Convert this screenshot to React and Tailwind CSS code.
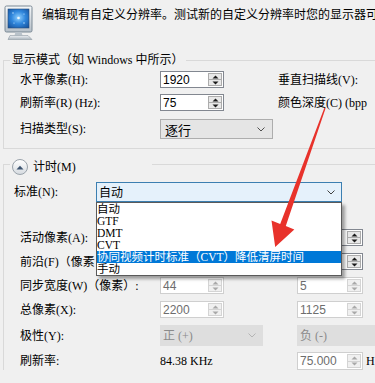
import React from "react";

const SERIF = "font-['Liberation_Serif','Noto_Sans_CJK_SC',serif]";
const SANS = "font-['Liberation_Sans','Noto_Sans_CJK_SC',sans-serif]";

function Tri({ up, color }) {
  return (
    <svg width="7" height="4" viewBox="0 0 7 4">
      {up ? <path d="M0.5 3.5 L3.5 0.5 L6.5 3.5 Z" fill={color} /> : <path d="M0.5 0.5 L6.5 0.5 L3.5 3.5 Z" fill={color} />}
    </svg>
  );
}

function Spin({ value, disabled, wide }) {
  return (
    <div
      className={
        (wide ? "w-[66px] " : "w-[64px] ") +
        (disabled ? "border-[#cfcfcf] text-[#6d6d6d] " : "border-[#828790] text-black ") +
        "flex h-full shrink-0 items-stretch border bg-white"
      }
    >
      <span className={SANS + " flex flex-1 items-center pl-[2px] text-[12px] leading-none"}>{value}</span>
      <div
        className={
          (disabled ? "border-[#d4d4d4] bg-[#f0f0f0] " : "border-[#acacac] bg-[#e8e8e8] ") +
          "m-[1px] flex w-[14px] flex-col border"
        }
      >
        <div className={(disabled ? "border-[#d4d4d4] " : "border-[#acacac] ") + "flex flex-1 items-center justify-center border-b"}>
          <Tri up color={disabled ? "#a8a8a8" : "#1a1a1a"} />
        </div>
        <div className="flex flex-1 items-center justify-center">
          <Tri color={disabled ? "#a8a8a8" : "#1a1a1a"} />
        </div>
      </div>
    </div>
  );
}

function Chevron({ color }) {
  return (
    <svg width="8" height="5" viewBox="0 0 8 5">
      <path d="M0.5 0.5 L4 4 L7.5 0.5" fill="none" stroke={color} strokeWidth="1" />
    </svg>
  );
}

function Label({ children, w = "w-[140px]" }) {
  return <span className={w + " " + SERIF + " shrink-0 whitespace-nowrap text-[12px] leading-none text-black"}>{children}</span>;
}

function MonitorIcon() {
  return (
    <svg width="30" height="36" viewBox="0 0 30 36">
      <defs>
        <linearGradient id="frm" x1="0" y1="0" x2="0" y2="1">
          <stop offset="0" stopColor="#f6f8fa" />
          <stop offset="1" stopColor="#b5bec7" />
        </linearGradient>
        <radialGradient id="scr" cx="0.5" cy="0.45" r="0.75">
          <stop offset="0" stopColor="#8fd0ff" />
          <stop offset="0.45" stopColor="#2f86dc" />
          <stop offset="1" stopColor="#134a92" />
        </radialGradient>
        <linearGradient id="bse" x1="0" y1="0" x2="0" y2="1">
          <stop offset="0" stopColor="#eef1f4" />
          <stop offset="1" stopColor="#aab4bd" />
        </linearGradient>
      </defs>
      <rect x="1" y="1" width="27" height="26" rx="1.5" fill="url(#frm)" stroke="#7b8995" />
      <rect x="4" y="4" width="21" height="19" fill="url(#scr)" stroke="#2b4f7c" strokeWidth="0.6" />
      <circle cx="14.5" cy="13" r="1.3" fill="#e8f6ff" />
      <circle cx="9" cy="8" r="0.7" fill="#cfeaff" />
      <circle cx="20" cy="9" r="0.6" fill="#cfeaff" />
      <circle cx="10" cy="18" r="0.6" fill="#cfeaff" />
      <circle cx="20" cy="18" r="0.7" fill="#cfeaff" />
      <path d="M11.5 27 H17.5 L18.5 30.5 H10.5 Z" fill="#b9c2ca" />
      <path d="M6 30.5 H24 L28 34.5 H4 Z" fill="url(#bse)" stroke="#8d98a2" strokeWidth="0.6" />
    </svg>
  );
}

export default function App() {
  const items = ["自动", "GTF", "DMT", "CVT", "协同视频计时标准（CVT）降低清屏时间", "手动"];
  return (
    <div className="relative h-[383px] w-[375px] overflow-hidden bg-[#f0f0f0]">
      {/* header */}
      <div className="flex h-[54px] items-start">
        <div className="ml-[4px] mt-[5px] shrink-0">
          <MonitorIcon />
        </div>
        <span className="ml-[8px] mt-[6px] whitespace-nowrap font-['Noto_Sans_CJK_SC',sans-serif] text-[12px] leading-[16px] text-black">
          编辑现有自定义分辨率。测试新的自定义分辨率时您的显示器可
        </span>
      </div>

      {/* group 1 */}
      <fieldset className="ml-[3px] w-[400px] border-b border-l border-t border-[#d9d9d9]">
        <legend className={SERIF + " ml-[6px] h-[12px] px-[2px] text-[12px] leading-[12px] text-black"}>
          显示模式（如 Windows 中所示）
        </legend>
        <div className="flex flex-col pb-[9px] pl-[16px] pt-[5px]">
          <div className="flex h-[17px] items-center">
            <Label>水平像素(H):</Label>
            <Spin value="1920" />
            <span className={SERIF + " ml-[54px] whitespace-nowrap text-[12px] leading-none"}>垂直扫描线(V):</span>
          </div>
          <div className="mt-[6px] flex h-[17px] items-center">
            <Label>刷新率(R) (Hz):</Label>
            <Spin value="75" />
            <span className={SERIF + " ml-[54px] whitespace-nowrap text-[12px] leading-none"}>颜色深度(C) (bpp</span>
          </div>
          <div className="mt-[8px] flex h-[20px] items-center">
            <Label>扫描类型(S):</Label>
            <div className="flex h-full w-[113px] items-center justify-between border border-[#adadad] bg-[#e5e5e5] pl-[4px] pr-[7px]">
              <span className="font-['Noto_Sans_CJK_SC',sans-serif] text-[13px] leading-none text-black">逐行</span>
              <Chevron color="#505050" />
            </div>
          </div>
        </div>
      </fieldset>

      {/* group 2 */}
      <fieldset className="ml-[3px] mt-[10px] w-[400px] border-l border-t border-[#d9d9d9]">
        <legend className="ml-[6px] h-[10px] w-[142px] pl-[2px]">
          <div className="flex items-start">
            <div className="flex h-[16px] w-[16px] items-center justify-center rounded-full border border-[#9aa3ab] bg-gradient-to-b from-[#ffffff] to-[#d6dbe0]">
              <svg width="8" height="5" viewBox="0 0 8 5">
                <path d="M0.5 4.5 L4 0.8 L7.5 4.5 Z" fill="#3d5470" />
              </svg>
            </div>
            <span className={SERIF + " ml-[5px] text-[12px] leading-[16px] text-black"}>计时(M)</span>
          </div>
        </legend>

        <div className="flex flex-col pt-[13px]">
          <div className="flex h-[20px] items-center pl-[10px]">
            <Label w="w-[82px]">标准(N):</Label>
            <div className="relative h-full w-[246px]">
              <div className="flex h-full w-full items-center justify-between border border-[#3c7fb1] bg-[#e5f1fb] pl-[2px] pr-[6px]">
                <span className="font-['Noto_Sans_CJK_SC',sans-serif] text-[12px] leading-none text-black">自动</span>
                <Chevron color="#404040" />
              </div>
              <div className="absolute left-0 top-full z-10 flex w-full flex-col border border-[#5a5a5a] bg-white shadow-[3px_3px_3px_rgba(0,0,0,0.35)]">
                {items.map((t, i) => (
                  <div
                    key={t}
                    className={
                      (i === 4 ? "bg-[#0078d7] text-white " : "text-black ") +
                      SERIF +
                      " flex h-[12px] items-center overflow-hidden whitespace-nowrap text-[11.5px] leading-[11px]"
                    }
                  >
                    {t}
                  </div>
                ))}
              </div>
            </div>
          </div>

          <div className="mt-[27px] flex h-[17px] items-center pl-[16px]">
            <Label w="w-[76px]">活动像素(A):</Label>
            <div className="ml-[64px] h-full">
              <Spin value="" />
            </div>
            <div className="ml-[73px] h-full">
              <Spin value="" wide />
            </div>
          </div>
          <div className="mt-[7px] flex h-[17px] items-center pl-[16px]">
            <span className={SERIF + " w-[76px] shrink-0 overflow-hidden whitespace-nowrap text-[12px] leading-none text-black"}>前沿(F)（像素</span>
            <div className="ml-[64px] h-full">
              <Spin value="" />
            </div>
            <div className="ml-[73px] h-full">
              <Spin value="" wide />
            </div>
          </div>
          <div className="mt-[7px] flex h-[17px] items-center pl-[16px]">
            <Label>同步宽度(W)（像素）:</Label>
            <Spin value="44" disabled />
            <div className="ml-[73px] h-full">
              <Spin value="5" wide disabled />
            </div>
          </div>
          <div className="mt-[7px] flex h-[17px] items-center pl-[16px]">
            <Label>总像素(X):</Label>
            <Spin value="2200" disabled />
            <div className="ml-[73px] h-full">
              <Spin value="1125" wide disabled />
            </div>
          </div>
          <div className="mt-[7px] flex h-[21px] items-center pl-[16px]">
            <Label>极性(Y):</Label>
            <div className="flex h-full w-[103px] items-center justify-between bg-[#dedede] pl-[3px] pr-[7px]">
              <span className={SERIF + " text-[12px] leading-none text-[#8a8a8a]"}>正 (+)</span>
              <Chevron color="#b4b4b4" />
            </div>
            <div className="ml-[34px] flex h-full w-[110px] items-center bg-[#dedede] pl-[3px]">
              <span className={SERIF + " text-[12px] leading-none text-[#8a8a8a]"}>负 (-)</span>
            </div>
          </div>
          <div className="mt-[6px] flex h-[18px] items-center pl-[16px]">
            <Label>刷新率:</Label>
            <span className={SERIF + " w-[64px] shrink-0 whitespace-nowrap text-[12px] leading-none text-black"}>84.38 KHz</span>
            <div className="ml-[73px] h-full">
              <Spin value="75.000" wide disabled />
            </div>
            <span className={SERIF + " ml-[3px] text-[12px] leading-none text-black"}>H</span>
          </div>
        </div>
      </fieldset>

      {/* red annotation arrow */}
      <svg className="pointer-events-none absolute left-0 top-0 z-20" width="375" height="383" viewBox="0 0 375 383">
        <polygon
          points="324.4,107.8 325.6,108.2 285.8,226 294.3,229.5 275.2,247 271.5,220.5 280.2,224"
          fill="#e8322b"
        />
      </svg>
    </div>
  );
}
